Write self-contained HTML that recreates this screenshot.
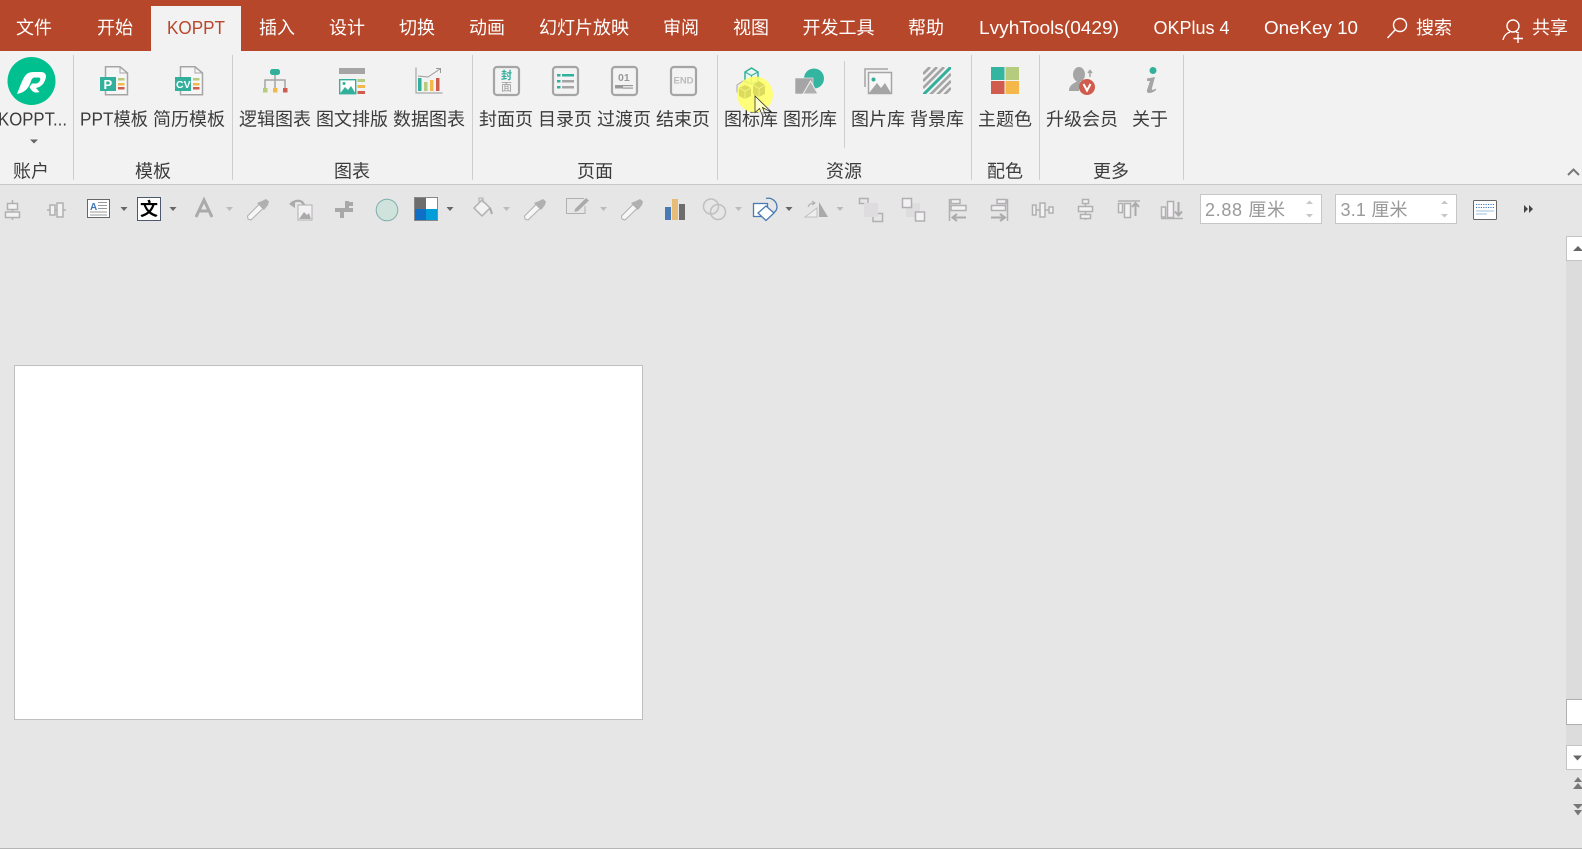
<!DOCTYPE html>
<html><head><meta charset="utf-8"><style>
html,body{margin:0;padding:0;background:#e6e6e6;width:1582px;height:849px;overflow:hidden}
svg{display:block;position:absolute;left:0;top:0}
text{font-family:"Liberation Sans","Noto Sans CJK SC",sans-serif;font-size:18px}
.t text{fill:#fff}
.l text{fill:#3c3c3c}
.g{fill:none;stroke:#b0b0b0;stroke-width:1.5}
.h{fill:#f4f1f4;stroke:#b0b0b0;stroke-width:1.5}
</style></head><body>
<svg width="1582" height="849" viewBox="0 0 1582 849">
<defs><clipPath id="hc"><rect x="923" y="67" width="28" height="27"/></clipPath></defs>
<rect width="1582" height="849" fill="#e6e6e6"/>
<rect width="1582" height="51" fill="#b7472a"/>
<rect y="51" width="1582" height="133" fill="#f2f2f2"/>
<rect y="184" width="1582" height="1" fill="#c8c8c8"/>
<rect x="151" y="6" width="90" height="46" fill="#f2f2f2"/>
<g class="t">
<text x="16" y="34">文件</text><text x="97" y="34">开始</text>
<text x="167" y="34" style="fill:#b7472a" textLength="58" lengthAdjust="spacingAndGlyphs">KOPPT</text>
<text x="259" y="34">插入</text><text x="329" y="34">设计</text><text x="399" y="34">切换</text>
<text x="469" y="34">动画</text><text x="539" y="34">幻灯片放映</text><text x="663" y="34">审阅</text>
<text x="733" y="34">视图</text><text x="802.500" y="34">开发工具</text><text x="908" y="34">帮助</text>
<text x="979" y="34" textLength="140" lengthAdjust="spacingAndGlyphs">LvyhTools(0429)</text>
<text x="1153.500" y="34" textLength="76" lengthAdjust="spacingAndGlyphs">OKPlus 4</text>
<text x="1264" y="34" textLength="94" lengthAdjust="spacingAndGlyphs">OneKey 10</text>
<text x="1416" y="34">搜索</text><text x="1532" y="34">共享</text>
</g>
<g fill="none" stroke="#fff" stroke-width="1.4">
<circle cx="1400" cy="25" r="6.5"/><path d="M1395 30L1387.5 38"/>
<circle cx="1513" cy="26" r="6"/><path d="M1503 40C1504 35 1507 33 1510 32M1516 32L1519 33M1518 34V43M1513.5 38.5H1523"/>
</g>
<!-- separators -->
<g fill="#cdcdcd">
<rect x="73" y="55" width="1" height="125"/><rect x="232" y="55" width="1" height="125"/><rect x="472" y="55" width="1" height="125"/>
<rect x="717" y="55" width="1" height="125"/><rect x="844" y="61" width="1" height="87"/><rect x="971" y="55" width="1" height="125"/>
<rect x="1039" y="55" width="1" height="125"/><rect x="1183" y="55" width="1" height="125"/>
</g>
<!-- labels -->
<g class="l">
<text x="-2" y="125.5" textLength="69" lengthAdjust="spacingAndGlyphs">KOPPT...</text>
<text x="80" y="125.5" textLength="68" lengthAdjust="spacingAndGlyphs">PPT模板</text><text x="153" y="125.5">简历模板</text>
<text x="239" y="125.5">逻辑图表</text><text x="316" y="125.5">图文排版</text><text x="393" y="125.5">数据图表</text>
<text x="479" y="125.5">封面页</text><text x="538" y="125.5">目录页</text><text x="597" y="125.5">过渡页</text><text x="656" y="125.5">结束页</text>
<text x="724" y="125.5">图标库</text><text x="783" y="125.5">图形库</text><text x="851" y="125.5">图片库</text><text x="910" y="125.5">背景库</text>
<text x="978" y="125.5">主题色</text><text x="1046" y="125.5">升级会员</text><text x="1132" y="125.5">关于</text>
<text x="13" y="177.5">账户</text><text x="135" y="177.5">模板</text><text x="334" y="177.5">图表</text><text x="577" y="177.5">页面</text>
<text x="826" y="177.5">资源</text><text x="987" y="177.5">配色</text><text x="1093" y="177.5">更多</text>
</g>
<path d="M30 139.5H38L34 143.5Z" fill="#666"/>
<path d="M1568 175L1573.5 169.5L1579 175" fill="none" stroke="#777" stroke-width="2"/>
<!-- logo -->
<circle cx="31.5" cy="81" r="24" fill="#00c08f"/>
<path fill="#fff" d="M17 94C19.500 88 22 80 25 76C27 73 30 72 34 72H41C45 72 47 75 45.500 79C44 84 41 87 36 88L39.500 92C35 93.500 32 92 29.500 87L32 83.500H36C38.500 83.500 40 81 40.300 79.500C40.500 78 39.500 77.500 38.500 77.500H35C33 77.500 32 78.500 31 81C29 88 25 92.500 17 94Z"/>
<!-- ppt / cv -->
<g>
<path d="M105.500 77V66.800H120L127.500 73V94.800H105.500V91" fill="#f6f6f6" stroke="#a5a5a5" stroke-width="1.500"/><path d="M120 67V73H127" fill="none" stroke="#a5a5a5"/>
<rect x="100" y="77" width="16" height="14" fill="#33b09c"/>
<rect x="118" y="78" width="6.500" height="2.500" fill="#b5cc7f"/><rect x="118" y="83" width="6.500" height="2.500" fill="#f4b84a"/><rect x="118" y="87" width="6.500" height="2.500" fill="#d05c4d"/>
</g>
<text x="103.500" y="89" style="font-size:13px;font-weight:bold;fill:#fff">P</text>
<g transform="translate(75 0)">
<path d="M105.500 77V66.800H120L127.500 73V94.800H105.500V91" fill="#f6f6f6" stroke="#a5a5a5" stroke-width="1.500"/><path d="M120 67V73H127" fill="none" stroke="#a5a5a5"/>
<rect x="100" y="77" width="16" height="14" fill="#33b09c"/>
<rect x="118" y="78" width="6.500" height="2.500" fill="#b5cc7f"/><rect x="118" y="83" width="6.500" height="2.500" fill="#f4b84a"/><rect x="118" y="87" width="6.500" height="2.500" fill="#d05c4d"/>
</g>
<text x="176" y="88" style="font-size:10.500px;font-weight:bold;fill:#fff">CV</text>
<!-- org -->
<rect x="270" y="69" width="10" height="6" rx="2.500" fill="#33b09c"/>
<path d="M275 75V88M265 88V80H285V88" fill="none" stroke="#a5a5a5" stroke-width="1.500"/>
<rect x="263" y="88" width="4.500" height="4.500" fill="#b5cc7f"/><rect x="273" y="88" width="4.500" height="4.500" fill="#f4b84a"/><rect x="283" y="88" width="4.500" height="4.500" fill="#d05c4d"/>
<!-- layout -->
<rect x="339" y="68" width="26" height="6" fill="#a5a5a5"/>
<rect x="339.700" y="79.700" width="16" height="14" fill="#fff" stroke="#33b09c" stroke-width="1.400"/>
<path d="M340 93.500L345 87L348 90L351 86L355.500 93.500Z" fill="#33b09c"/><circle cx="344" cy="83.500" r="1.500" fill="#33b09c"/>
<rect x="357.500" y="79" width="7.500" height="3" fill="#b5cc7f"/><rect x="357.500" y="85" width="7.500" height="3" fill="#f4b84a"/><rect x="357.500" y="91" width="7.500" height="3" fill="#d05c4d"/>
<!-- chart -->
<path d="M416 67.500V93H442.500" fill="none" stroke="#a8a8a8" stroke-width="1.200"/>
<rect x="418" y="78" width="3.500" height="13" fill="#33b09c"/><rect x="424" y="82" width="3.500" height="9" fill="#b5cc7f"/><rect x="430" y="80" width="3.500" height="11" fill="#f4b84a"/><rect x="436" y="78" width="3.500" height="13" fill="#d05c4d"/>
<path d="M418 76L428 77L440 69M436 68.500H440.500V73" fill="none" stroke="#999"/>
<!-- page icons -->
<g fill="#f3f3f3" stroke="#a5a5a5" stroke-width="2.200">
<rect x="494" y="67" width="25" height="28" rx="3"/><rect x="553" y="67" width="25" height="28" rx="3"/><rect x="612" y="67" width="25" height="28" rx="3"/><rect x="671" y="67" width="25" height="28" rx="3"/>
</g>
<text x="501" y="79" style="font-size:11px;font-weight:bold;fill:#33b09c">封</text>
<text x="501" y="90.500" style="font-size:11px;fill:#999">面</text>
<g fill="#33b09c"><rect x="557" y="74" width="3.500" height="2.500"/><rect x="557" y="80" width="3.500" height="2.500"/><rect x="557" y="86" width="3.500" height="2.500"/></g>
<g fill="#33b09c"><rect x="562" y="74" width="12" height="2.500"/></g><g fill="#a5a5a5"><rect x="562" y="80" width="12" height="2.500"/><rect x="562" y="86" width="12" height="2.500"/></g>
<text x="618" y="81" style="font-size:10.500px;font-weight:bold;fill:#999">01</text>
<rect x="615" y="85" width="8" height="3.500" fill="#999"/><rect x="623" y="85" width="10" height="1.200" fill="#999"/><rect x="623" y="87.500" width="10" height="1.200" fill="#999"/>
<text x="673.500" y="83.500" style="font-size:9px;font-weight:bold;fill:#bbb" textLength="20" lengthAdjust="spacingAndGlyphs">END</text>
<!-- cube icons -->
<path d="M745 72L751.500 68L758 72V81L751.500 84L745 81Z" fill="#e8f7f3" stroke="#33b09c" stroke-width="1.500"/><path d="M745 72L751.500 75.500L758 72M751.500 75.500V84" fill="none" stroke="#33b09c"/>
<path d="M737 85L743 81L748 84V93L743 96L737 92Z" fill="#eee" stroke="#aaa"/>
<!-- highlight -->
<circle cx="755" cy="94.500" r="18" fill="#ffff66" fill-opacity=".88"/>
<g fill="#dcdc5c">
<path d="M739 88L745 85L751 88V96L745 99L739 96Z"/><path d="M753 85L759 81L765 85V94L759 97L753 94Z"/></g>
<path d="M739 88L745 91L751 88M745 91V99M753 85L759 88.500L765 85M759 88.500V97" fill="none" stroke="#f4f48a" stroke-width=".8"/>
<!-- shapes -->
<circle cx="814" cy="78.500" r="10" fill="#33b5a0"/>
<rect x="795" y="78" width="18" height="16" fill="#a5a5a5" stroke="#f2f2f2" stroke-width=".6"/>
<path d="M810.500 81L803 94H818Z" fill="#b0b0b0" stroke="#f2f2f2"/>
<!-- picture -->
<path d="M865 87V69H888" fill="none" stroke="#a5a5a5" stroke-width="1.500"/>
<rect x="868.500" y="72.500" width="23" height="21" fill="#f6f6f6" stroke="#a5a5a5" stroke-width="1.500"/>
<path d="M869 93L877 83L881 88L885 83L891 93Z" fill="#a5a5a5"/><circle cx="873.500" cy="79.500" r="2" fill="#33b09c"/>
<!-- hatch -->
<g clip-path="url(#hc)" fill="none" stroke-width="2.700" stroke="#a5a5a5">
<path d="M923 74L930 67M923 81L937 67M923 88L944 67"/>
<path d="M923 95L951 67" stroke="#33b09c" stroke-width="3"/>
<path d="M930 95L951 74M937 95L951 81M944 95L951 88"/>
</g>
<!-- palette -->
<rect x="991" y="67" width="13.500" height="13" fill="#33b5a0"/><rect x="1005.500" y="67" width="13.500" height="13" fill="#b5cc7f"/>
<rect x="991" y="81" width="13.500" height="13" fill="#d05c4d"/><rect x="1005.500" y="81" width="13.500" height="13" fill="#f4b84a"/>
<!-- member -->
<ellipse cx="1079" cy="74.500" rx="6" ry="7.500" fill="#a5a5a5"/>
<path d="M1069 91C1069 85 1074 83 1078 81L1086 84C1081 86 1079 88 1079 91Z" fill="#a5a5a5"/>
<path d="M1090 77V71M1088 73L1090 70.500L1092 73" fill="none" stroke="#a5a5a5" stroke-width="1.500"/>
<circle cx="1087" cy="87" r="8" fill="#d05c4d"/><path d="M1083.500 84L1087 90.500L1090.500 84" fill="none" stroke="#fff" stroke-width="2"/>
<!-- info -->
<circle cx="1153" cy="70.500" r="3.500" fill="#33b09c"/>
<path d="M1147 78.500L1155 77L1152 88C1151.500 90 1152 90.500 1156 88.500L1156 90C1153 93 1146 95 1147 90L1150 81L1147 81Z" fill="#a5a5a5"/>
<!-- toolbar -->
<g class="g">
<path d="M12.500 200V220"/><rect x="7.500" y="203.500" width="10" height="6" fill="#f4f1f4"/><rect x="5.500" y="212" width="14" height="5.500" fill="#f4f1f4"/>
<path d="M47 210H66"/><rect x="50" y="205" width="5" height="10" fill="#f4f1f4"/><rect x="57" y="203" width="6" height="14" fill="#f4f1f4"/>
</g>
<rect x="87.500" y="199.500" width="22" height="18" fill="#fff" stroke="#666"/>
<text x="90" y="210" style="font-size:10px;font-weight:bold;fill:#3f76b5">A</text>
<path d="M98 202.500H107M98 205.500H107M98 208.500H107M90 212H107M90 215H107" stroke="#999" fill="none"/>
<path d="M120.500 207H127.500L124 211Z" fill="#666"/>
<rect x="137.500" y="197.500" width="23" height="23" fill="#fff" stroke="#4d5a6b"/>
<text x="140" y="215.500" style="font-size:18px;font-weight:bold;fill:#000">文</text>
<path d="M169.500 207H176.500L173 211Z" fill="#666"/>
<path d="M196 217L204 200L212 217M199 211H209" fill="none" stroke="#aaa" stroke-width="3"/>
<path d="M226 207H233L229.500 211Z" fill="#bbb"/>
<g id="dropper"><path d="M248 219L247.500 216L259 204.500L263 208.500L251 220Z" fill="#f6f6f6" stroke="#b0b0b0"/><path d="M257 203L264 210L268 205L269 201.500L266 199L262 201Z" fill="#b0b0b0"/></g>
<path d="M291 203L296 201C300 200 303 202 304 205" fill="none" stroke="#aaa" stroke-width="2.200"/><path d="M289 204L295 200V208Z" fill="#aaa"/>
<rect x="298" y="205" width="14" height="15" fill="#f4f1f4" stroke="#b0b0b0"/><path d="M299 219L304 212L307 215L309 213L311 219Z" fill="#aaa"/>
<path d="M342 208V218M347 201V212M335 210H353M347 204H353" stroke="#a8a8a8" stroke-width="4" fill="none"/>
<circle cx="387" cy="210" r="10.800" fill="#cfe2dc" stroke="#7fb0ac"/>
<rect x="414" y="197" width="12" height="12" fill="#6d6d6d"/><rect x="426" y="197" width="12" height="12" fill="#fff"/><rect x="414" y="209" width="12" height="12" fill="#0f6fc6"/><rect x="426" y="209" width="12" height="12" fill="#009dd9"/>
<rect x="414.500" y="197.500" width="23" height="23" fill="none" stroke="#888"/>
<path d="M446.500 207H453.500L450 211Z" fill="#666"/>
<path d="M474 208L482 200L490 208L482 216Z" class="h"/><path d="M479 202V198H483V203" fill="none" stroke="#b0b0b0"/><path d="M490 208L492 214" stroke="#aaa" stroke-width="2"/>
<path d="M503 207H510L506.500 211Z" fill="#bbb"/>
<use href="#dropper" x="277"/>
<path d="M584 198.500H566.500V213.500H585V206" fill="none" stroke="#b0b0b0"/><path d="M575 209L586 198L589 200.500L578 211L574.500 212Z" fill="#aaa"/>
<path d="M600 207H607L603.500 211Z" fill="#bbb"/>
<use href="#dropper" x="374"/>
<rect x="665" y="207" width="6" height="13" fill="#4a7ab5"/><rect x="672" y="199" width="6" height="21" fill="#e5bc78"/><rect x="679" y="204" width="6" height="16" fill="#6d6d6d"/>
<g fill="none" stroke="#c0c0c0" stroke-width="1.500"><circle cx="711" cy="206.500" r="7.500"/><circle cx="718" cy="212" r="7.500"/></g>
<path d="M735 207H742L738.500 211Z" fill="#bbb"/>
<path d="M766 198.500C771 197 777 201 777 207C777 210 775 212 773 213" fill="none" stroke="#4a7ab5" stroke-width="1.300"/>
<rect x="753.500" y="203.500" width="14" height="13" fill="#fff" stroke="#4a7ab5" stroke-width="1.300"/>
<path d="M766 206L774 213L766 220.500L758 213Z" fill="#fff" stroke="#4a7ab5" stroke-width="1.300"/>
<path d="M785.500 207H792.500L789 211Z" fill="#666"/>
<path d="M805 217L817 208V217Z" fill="#eee" stroke="#c0c0c0"/><path d="M819 202L828 217H819Z" fill="#aaa"/><path d="M808 207C809 204 811 203 814 203M812 201L815 203L812 205" fill="none" stroke="#aaa"/>
<path d="M836.500 207H843.500L840 211Z" fill="#bbb"/>
<g class="g">
<path d="M865 203.500H859.500V198.500H868V203"/><rect x="864" y="203" width="14" height="14" fill="#dedcde" stroke="none"/><path d="M878 213.500H882.500V221.500H873V217"/>
<rect x="906" y="203" width="14" height="14" fill="#dedcde" stroke="none"/>
<rect x="902.500" y="198.500" width="9" height="9" fill="#f4f1f4"/><rect x="915.500" y="212" width="9" height="9" fill="#f4f1f4"/>
<path d="M949.500 199V221"/><rect x="951" y="199.500" width="9" height="4" fill="#f4f1f4"/><rect x="951" y="205.500" width="15" height="5" fill="#f4f1f4"/>
<path d="M1007.500 199V221"/><rect x="997" y="199.500" width="9" height="4" fill="#f4f1f4"/><rect x="991.500" y="205.500" width="14" height="5" fill="#f4f1f4"/>
<rect x="1032.500" y="205" width="3.500" height="10" fill="#f4f1f4"/><rect x="1040" y="203" width="5" height="14" fill="#f4f1f4"/><rect x="1049" y="207" width="4" height="6" fill="#f4f1f4"/>
<path d="M1036 210H1040M1045 210H1049"/>
<path d="M1085.500 199V220"/><rect x="1082.500" y="199.500" width="6" height="4" fill="#f4f1f4"/><rect x="1078.500" y="206.500" width="14" height="5" fill="#f4f1f4"/><rect x="1080.500" y="214.500" width="10" height="4" fill="#f4f1f4"/>
<path d="M1118 201H1140"/><rect x="1118.500" y="203.500" width="4" height="9" fill="#f4f1f4"/><rect x="1124.500" y="203.500" width="6" height="14" fill="#f4f1f4"/>
<path d="M1161 218.500H1183"/><rect x="1161.500" y="207" width="4" height="10" fill="#f4f1f4"/><rect x="1167.500" y="201.500" width="6" height="16" fill="#f4f1f4"/>
</g>
<g fill="none" stroke="#aaa" stroke-width="2">
<path d="M966 217.500H953M957 214L952.500 217.500L957 221"/>
<path d="M991 217.500H1004M1000 214L1005 217.500L1000 221"/>
<path d="M1135.500 216V204M1132 207L1135.500 203L1139 207"/>
<path d="M1178.500 202V214.500M1175 211.500L1178.500 215.500L1182 211.500"/>
</g>
<!-- spin inputs -->
<rect x="1200.500" y="194.500" width="121" height="29" fill="#fff" stroke="#c6c6c6"/>
<rect x="1335.500" y="194.500" width="121" height="29" fill="#fff" stroke="#c6c6c6"/>
<text x="1205" y="216" style="fill:#999" textLength="80">2.88 厘米</text>
<text x="1340.500" y="216" style="fill:#999" textLength="67">3.1 厘米</text>
<g fill="#c6c6c6"><path d="M1306 204L1309.500 200.500L1313 204ZM1306 214L1313 214L1309.500 217.500ZM1441 204L1444.500 200.500L1448 204ZM1441 214L1448 214L1444.500 217.500Z"/></g>
<rect x="1473.500" y="200.500" width="23" height="19" rx="1" fill="#fff" stroke="#666"/>
<path d="M1476 204.500H1494M1476 207.500H1494" stroke="#3f76b5" stroke-dasharray="1.200 1.200"/><path d="M1476 211H1494M1476 214H1487" stroke="#9cc0dc"/>
<path d="M1524 205L1528 209L1524 213ZM1529 205L1533 209L1529 213Z" fill="#444"/>
<!-- slide -->
<rect x="14.500" y="365.500" width="628" height="354" fill="#fff" stroke="#bfbfbf"/>
<!-- scrollbar -->
<rect x="1566" y="261" width="16" height="484" fill="#dcdcdc"/>
<path d="M1582 236.500H1566.500V260.500H1582" fill="#fff" stroke="#c4c4c4"/>
<path d="M1573 251L1578 246L1583 251Z" fill="#666"/>
<path d="M1582 699.500H1566.500V724.500H1582" fill="#fff" stroke="#b0b0b0"/>
<path d="M1582 745.500H1566.500V769.500H1582" fill="#fff" stroke="#c4c4c4"/>
<path d="M1573 755.500H1582L1577.500 760.500Z" fill="#666"/>
<path d="M1578 777L1582 782H1574ZM1578 783L1583 789H1573Z" fill="#777"/>
<path d="M1573 804H1583L1578 809ZM1574 810H1582L1578 815.500Z" fill="#777"/>
<rect y="848" width="1582" height="1" fill="#b5b5b5"/>
<!-- cursor -->
<path d="M755 96V112.500L759.500 108.500L763 117L766 116L762.500 107.500L772 112.500Z" fill="#fff" fill-opacity=".6" stroke="#333" stroke-width=".8"/>
</svg>
</body></html>
